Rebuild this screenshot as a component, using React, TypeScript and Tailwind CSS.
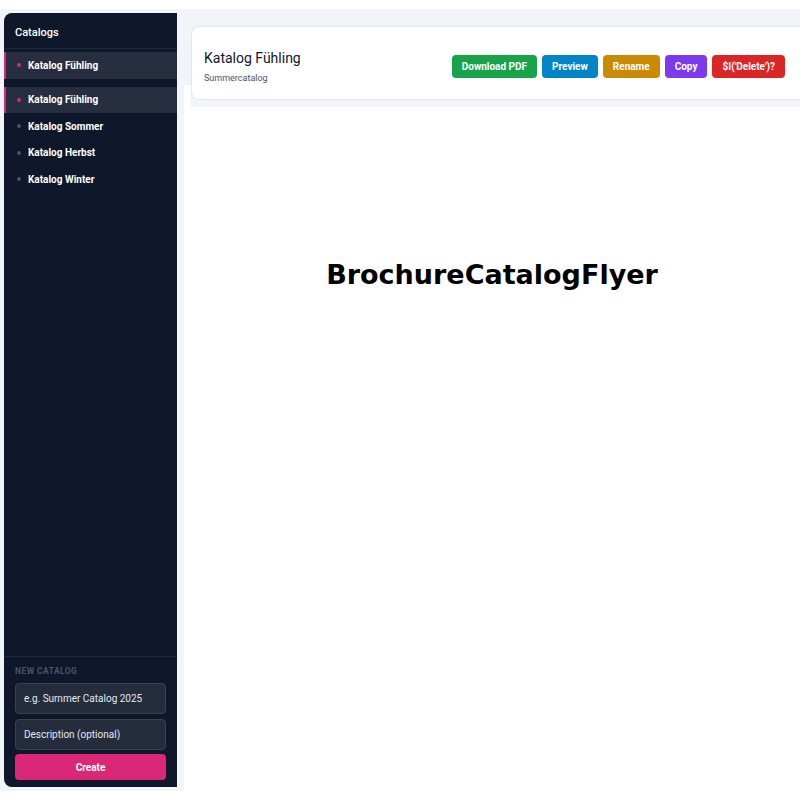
import React from 'react'

const catalogs = [
  { name: 'Katalog Fühling', active: true },
  { name: 'Katalog Sommer', active: false },
  { name: 'Katalog Herbst', active: false },
  { name: 'Katalog Winter', active: false },
]

const actions = [
  { label: 'Download PDF', cls: 'bg-[#16a34a]' },
  { label: 'Preview', cls: 'bg-[#0284c7]' },
  { label: 'Rename', cls: 'bg-[#ca8a04]' },
  { label: 'Copy', cls: 'bg-[#7c3aed]' },
  { label: "$I('Delete')?", cls: 'bg-[#dc2626]' },
]

function CatalogRow({ name, active }: { name: string; active: boolean }) {
  return (
    <div
      className={
        'flex h-[26.5px] items-center gap-[7px] border-l-2 pl-[11px] ' +
        (active ? 'border-[#db2777] bg-white/10' : 'border-transparent')
      }
    >
      <span className={'h-[4px] w-[4px] rounded-full ' + (active ? 'bg-[#db2777]' : 'bg-[#475569]')} />
      <span className="text-[10px] font-bold text-white">{name}</span>
    </div>
  )
}

export default function App() {
  return (
    <div className="min-h-screen overflow-hidden bg-white pt-[9px] font-['Roboto',sans-serif]">
      <div className="flex h-[782px] bg-[#f1f5f9]">
        {/* Sidebar */}
        <aside className="my-[4px] ml-[4px] flex w-[173px] shrink-0 flex-col rounded-l-lg bg-[#0f172a]">
          <div className="flex h-[36px] items-center border-b border-[#1e293b] px-[11px] pt-[5px]">
            <span className="text-[11px] font-medium text-white">Catalogs</span>
          </div>
          <div className="mt-[3px]">
            <CatalogRow name="Katalog Fühling" active />
          </div>
          <div className="mt-[8px] flex-1">
            {catalogs.map((c) => (
              <CatalogRow key={c.name} name={c.name} active={c.active} />
            ))}
          </div>
          <div className="border-t border-[#1e293b] px-[11px] pt-[9px] pb-[7px]">
            <div className="mb-[6px] text-[8.5px] leading-[11px] font-bold tracking-wider text-[#475569] uppercase">
              New catalog
            </div>
            <input
              className="block h-[31px] w-full rounded-[4px] border border-[#3a4252] bg-[#252c3c] px-[8px] text-[10px] text-slate-200 outline-none placeholder:text-slate-200"
              placeholder="e.g. Summer Catalog 2025"
            />
            <input
              className="mt-[5px] block h-[31px] w-full rounded-[4px] border border-[#3a4252] bg-[#252c3c] px-[8px] text-[10px] text-slate-200 outline-none placeholder:text-slate-200"
              placeholder="Description (optional)"
            />
            <button className="mt-[4px] block h-[26px] w-full rounded-[4px] bg-[#db2777] text-[10px] font-bold text-white">
              Create
            </button>
          </div>
        </aside>

        {/* Main */}
        <main className="ml-[7px] flex min-w-0 flex-1 flex-col">
          <div className="relative z-10 mt-[17px] ml-[7px] bg-[#f1f5f9] pb-[7px]">
            <div className="flex h-[74px] items-center justify-between rounded-tl-lg rounded-bl-lg border border-r-0 border-[#e2e8f0] bg-white pt-[6px] pr-[15px] pl-[12px]">
              <div>
                <div className="text-[14px] leading-[19px] text-[#0f172a]">Katalog Fühling</div>
                <div className="mt-[4px] text-[9px] leading-[12px] text-[#475569]">Summercatalog</div>
              </div>
              <div className="flex items-center gap-[5px]">
                {actions.map((a) => (
                  <button
                    key={a.label}
                    className={'h-[23px] rounded-[4px] px-[10px] text-[10px] font-bold text-white ' + a.cls}
                  >
                    {a.label}
                  </button>
                ))}
              </div>
            </div>
          </div>
          <div className="-mt-[22px] flex-1 bg-white pt-[176px] text-center">
            <h1 className="font-['DejaVu_Sans',sans-serif] text-[27px] leading-none font-bold text-black">
              BrochureCatalogFlyer
            </h1>
          </div>
        </main>
      </div>
    </div>
  )
}
